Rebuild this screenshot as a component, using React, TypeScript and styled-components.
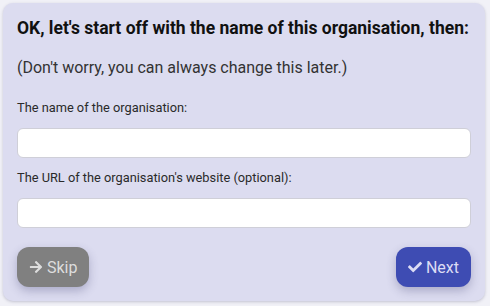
import styled, { createGlobalStyle } from "styled-components";
import { FaArrowRight, FaCheck } from "react-icons/fa";

const GlobalStyle = createGlobalStyle`
  html, body {
    margin: 0;
    padding: 0;
    background: #f1f1f7;
  }
  * {
    box-sizing: border-box;
  }
`;

const App = () => {
  return (
    <>
      <GlobalStyle />
      <Page>
        <Card>
          <Title>OK, let's start off with the name of this organisation, then:</Title>
          <Note>(Don't worry, you can always change this later.)</Note>
          <Field $gap={22}>
            <Label htmlFor='org-name'>The name of the organisation:</Label>
            <Input id='org-name' type='text' />
          </Field>
          <Field $gap={12}>
            <Label htmlFor='org-url'>The URL of the organisation's website (optional):</Label>
            <Input id='org-url' type='text' />
          </Field>
          <Actions>
            <Button $variant='skip'>
              <FaArrowRight />
              Skip
            </Button>
            <Button $variant='next'>
              <FaCheck />
              Next
            </Button>
          </Actions>
        </Card>
      </Page>
    </>
  );
};

const Page = styled.div`
  padding: 3px 5px 5px 3px;
  font-family: Roboto, "Liberation Sans", sans-serif;
`;

const Card = styled.div`
  background: #dcdcf0;
  border-radius: 10px;
  box-shadow: 0 1px 3px rgba(60, 60, 100, 0.25);
  padding: 15px 14px 14px 14px;
  display: flex;
  flex-direction: column;
`;

const Title = styled.h2`
  margin: 0;
  font-size: 17.5px;
  font-weight: 700;
  color: #111;
  line-height: 20px;
  white-space: nowrap;
`;

const Note = styled.p`
  margin: 20px 0 0 0;
  font-size: 16px;
  color: #333;
  line-height: 20px;
`;

const Field = styled.div<{ $gap: number }>`
  display: flex;
  flex-direction: column;
  margin-top: ${({ $gap }) => $gap}px;
`;

const Label = styled.label`
  font-size: 12.8px;
  color: #2a2a2a;
  line-height: 16px;
  margin-bottom: 12px;
`;

const Input = styled.input`
  height: 30px;
  border: 1px solid #cfcfd8;
  border-radius: 6px;
  background: #fff;
  outline: none;
  padding: 0 8px;
`;

const Actions = styled.div`
  display: flex;
  justify-content: space-between;
  margin-top: 19px;
`;

const Button = styled.button<{ $variant: "skip" | "next" }>`
  display: flex;
  align-items: center;
  gap: 4px;
  height: 40px;
  padding: 0 12px;
  border: none;
  border-radius: 12px;
  font-family: Roboto, "Liberation Sans", sans-serif;
  font-size: 16px;
  color: ${({ $variant }) => ($variant === "next" ? "#dcdcf4" : "#dddddd")};
  background: ${({ $variant }) => ($variant === "next" ? "#3e4cb3" : "#808080")};
  box-shadow: 0 4px 10px rgba(60, 60, 110, 0.3);
  cursor: pointer;
  svg {
    font-size: 14px;
  }
`;

export default App;
